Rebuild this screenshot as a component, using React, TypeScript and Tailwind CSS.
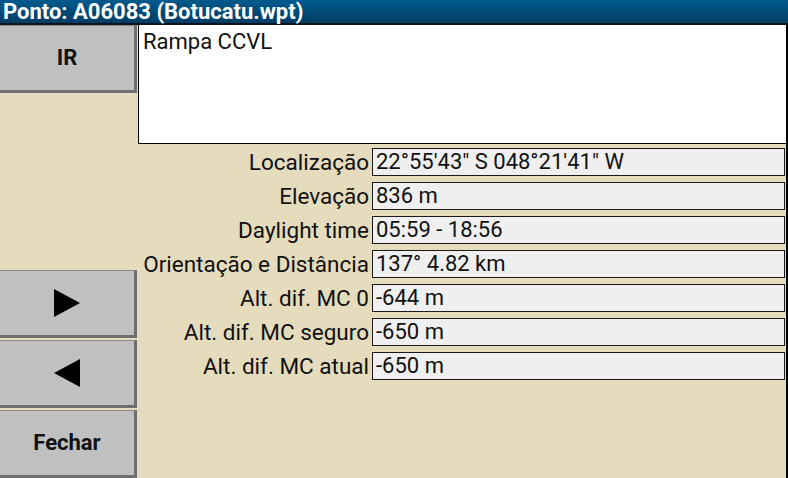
const rows = [
  { label: "Localização", value: "22°55'43\" S 048°21'41\" W" },
  { label: "Elevação", value: "836 m" },
  { label: "Daylight time", value: "05:59 - 18:56" },
  { label: "Orientação e Distância", value: "137° 4.82 km" },
  { label: "Alt. dif. MC 0", value: "-644 m" },
  { label: "Alt. dif. MC seguro", value: "-650 m" },
  { label: "Alt. dif. MC atual", value: "-650 m" },
];

function SideButton({ children }: { children: React.ReactNode }) {
  return (
    <button className="h-[68px] w-[137px] flex items-center justify-center bg-[#c0c0c0] border-t border-t-[#8a8a8a] border-r-[3px] border-b-[3px] border-[#6f6f6f] text-[22px] leading-none font-bold text-[#111]">
      {children}
    </button>
  );
}

export default function App() {
  return (
    <div
      className="w-[788px] h-[478px] flex flex-col bg-[#e5dcbe] overflow-hidden"
      style={{ fontFamily: "Roboto, 'Liberation Sans', sans-serif" }}
    >
      {/* Title bar */}
      <div className="h-[25px] shrink-0 flex items-center px-[3px] bg-gradient-to-b from-[#005a8e] to-[#003c63] border-b-2 border-[#0a1420]">
        <span className="text-white font-bold text-[22px] leading-none">Ponto: A06083 (Botucatu.wpt)</span>
      </div>

      <div className="flex-1 flex border-r-2 border-black">
        {/* Left buttons */}
        <div className="w-[138px] shrink-0 flex flex-col">
          <SideButton>IR</SideButton>
          <div className="flex-1" />
          <div className="flex flex-col gap-[2px]">
            <SideButton>
              <svg width="26" height="28" viewBox="0 0 26 28">
                <polygon points="0,0 26,14 0,28" fill="#000" />
              </svg>
            </SideButton>
            <SideButton>
              <svg width="26" height="28" viewBox="0 0 26 28">
                <polygon points="26,0 0,14 26,28" fill="#000" />
              </svg>
            </SideButton>
            <SideButton>Fechar</SideButton>
          </div>
        </div>

        {/* Right content */}
        <div className="flex-1 flex flex-col">
          <div className="h-[119px] bg-white border-l border-b border-black px-[4px] pt-[6px] text-[22px] text-[#111] leading-none">
            Rampa CCVL
          </div>
          <div className="flex flex-col gap-[6px] pt-[4px] pr-[1px]">
            {rows.map((r) => (
              <div key={r.label} className="flex items-center h-[28px]">
                <div className="w-[234px] shrink-0 text-right pr-[3px] text-[22.5px] leading-none text-[#111] whitespace-nowrap">
                  {r.label}
                </div>
                <div className="flex-1 h-[28px] flex items-center bg-[#efefef] border border-[#1a1a1a] px-[3px] text-[22px] leading-none text-[#111] whitespace-nowrap">
                  {r.value}
                </div>
              </div>
            ))}
          </div>
        </div>
      </div>
    </div>
  );
}
